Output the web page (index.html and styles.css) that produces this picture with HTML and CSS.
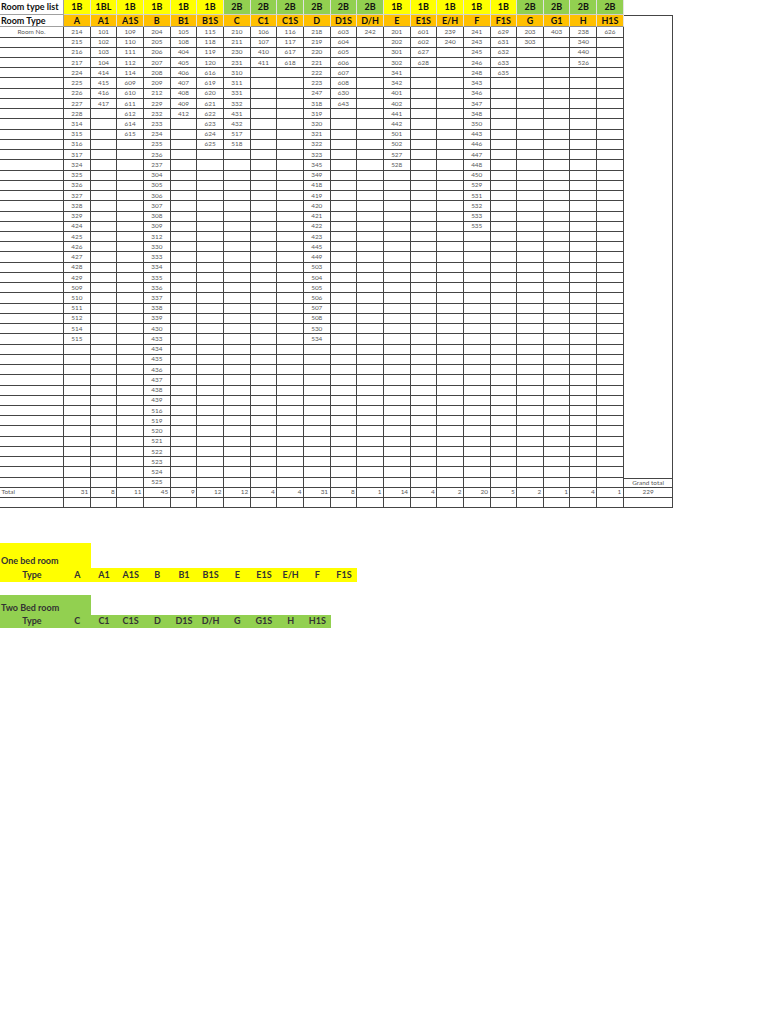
FILE: index.html
```html
<!DOCTYPE html>
<html lang="en">
<head>
<meta charset="utf-8">
<title>Room type list</title>
<link rel="stylesheet" href="styles.css">
</head>
<body>
<table class="sheet">
<colgroup><col class="lab"><col span="21" class="c"><col class="gtc"></colgroup>
<tr class="hd h1">
<td class="lab">Room type list</td>
<td class="y">1B</td><td class="y">1BL</td><td class="y">1B</td><td class="y">1B</td><td class="y">1B</td><td class="y">1B</td>
<td class="g">2B</td><td class="g">2B</td><td class="g">2B</td><td class="g">2B</td><td class="g">2B</td><td class="g">2B</td>
<td class="y">1B</td><td class="y">1B</td><td class="y">1B</td><td class="y">1B</td><td class="y">1B</td>
<td class="g">2B</td><td class="g">2B</td><td class="g">2B</td><td class="g">2B</td>
<td class="gt-none"></td>
</tr>
<tr class="hd h2">
<td class="lab">Room Type</td>
<td class="o">A</td><td class="o">A1</td><td class="o">A1S</td><td class="o">B</td><td class="o">B1</td><td class="o">B1S</td><td class="o">C</td><td class="o">C1</td><td class="o">C1S</td><td class="o">D</td><td class="o">D1S</td><td class="o">D/H</td><td class="o">E</td><td class="o">E1S</td><td class="o">E/H</td><td class="o">F</td><td class="o">F1S</td><td class="o">G</td><td class="o">G1</td><td class="o">H</td><td class="o">H1S</td>
<td class="gt-blank" rowspan="45"></td>
</tr>
<tr class="r"><td>Room No.</td><td>214</td><td>101</td><td>109</td><td>204</td><td>105</td><td>115</td><td>210</td><td>106</td><td>116</td><td>218</td><td>603</td><td>242</td><td>201</td><td>601</td><td>239</td><td>241</td><td>629</td><td>203</td><td>403</td><td>238</td><td>626</td></tr>
<tr class="r"><td></td><td>215</td><td>102</td><td>110</td><td>205</td><td>108</td><td>118</td><td>211</td><td>107</td><td>117</td><td>219</td><td>604</td><td></td><td>202</td><td>602</td><td>240</td><td>243</td><td>631</td><td>303</td><td></td><td>340</td><td></td></tr>
<tr class="r"><td></td><td>216</td><td>103</td><td>111</td><td>206</td><td>404</td><td>119</td><td>230</td><td>410</td><td>617</td><td>220</td><td>605</td><td></td><td>301</td><td>627</td><td></td><td>245</td><td>632</td><td></td><td></td><td>440</td><td></td></tr>
<tr class="r"><td></td><td>217</td><td>104</td><td>112</td><td>207</td><td>405</td><td>120</td><td>231</td><td>411</td><td>618</td><td>221</td><td>606</td><td></td><td>302</td><td>628</td><td></td><td>246</td><td>633</td><td></td><td></td><td>526</td><td></td></tr>
<tr class="r"><td></td><td>224</td><td>414</td><td>114</td><td>208</td><td>406</td><td>616</td><td>310</td><td></td><td></td><td>222</td><td>607</td><td></td><td>341</td><td></td><td></td><td>248</td><td>635</td><td></td><td></td><td></td><td></td></tr>
<tr class="r"><td></td><td>225</td><td>415</td><td>609</td><td>209</td><td>407</td><td>619</td><td>311</td><td></td><td></td><td>223</td><td>608</td><td></td><td>342</td><td></td><td></td><td>343</td><td></td><td></td><td></td><td></td><td></td></tr>
<tr class="r"><td></td><td>226</td><td>416</td><td>610</td><td>212</td><td>408</td><td>620</td><td>331</td><td></td><td></td><td>247</td><td>630</td><td></td><td>401</td><td></td><td></td><td>346</td><td></td><td></td><td></td><td></td><td></td></tr>
<tr class="r"><td></td><td>227</td><td>417</td><td>611</td><td>229</td><td>409</td><td>621</td><td>332</td><td></td><td></td><td>318</td><td>643</td><td></td><td>402</td><td></td><td></td><td>347</td><td></td><td></td><td></td><td></td><td></td></tr>
<tr class="r"><td></td><td>228</td><td></td><td>612</td><td>232</td><td>412</td><td>622</td><td>431</td><td></td><td></td><td>319</td><td></td><td></td><td>441</td><td></td><td></td><td>348</td><td></td><td></td><td></td><td></td><td></td></tr>
<tr class="r"><td></td><td>314</td><td></td><td>614</td><td>233</td><td></td><td>623</td><td>432</td><td></td><td></td><td>320</td><td></td><td></td><td>442</td><td></td><td></td><td>350</td><td></td><td></td><td></td><td></td><td></td></tr>
<tr class="r"><td></td><td>315</td><td></td><td>615</td><td>234</td><td></td><td>624</td><td>517</td><td></td><td></td><td>321</td><td></td><td></td><td>501</td><td></td><td></td><td>443</td><td></td><td></td><td></td><td></td><td></td></tr>
<tr class="r"><td></td><td>316</td><td></td><td></td><td>235</td><td></td><td>625</td><td>518</td><td></td><td></td><td>322</td><td></td><td></td><td>502</td><td></td><td></td><td>446</td><td></td><td></td><td></td><td></td><td></td></tr>
<tr class="r"><td></td><td>317</td><td></td><td></td><td>236</td><td></td><td></td><td></td><td></td><td></td><td>323</td><td></td><td></td><td>527</td><td></td><td></td><td>447</td><td></td><td></td><td></td><td></td><td></td></tr>
<tr class="r"><td></td><td>324</td><td></td><td></td><td>237</td><td></td><td></td><td></td><td></td><td></td><td>345</td><td></td><td></td><td>528</td><td></td><td></td><td>448</td><td></td><td></td><td></td><td></td><td></td></tr>
<tr class="r"><td></td><td>325</td><td></td><td></td><td>304</td><td></td><td></td><td></td><td></td><td></td><td>349</td><td></td><td></td><td></td><td></td><td></td><td>450</td><td></td><td></td><td></td><td></td><td></td></tr>
<tr class="r"><td></td><td>326</td><td></td><td></td><td>305</td><td></td><td></td><td></td><td></td><td></td><td>418</td><td></td><td></td><td></td><td></td><td></td><td>529</td><td></td><td></td><td></td><td></td><td></td></tr>
<tr class="r"><td></td><td>327</td><td></td><td></td><td>306</td><td></td><td></td><td></td><td></td><td></td><td>419</td><td></td><td></td><td></td><td></td><td></td><td>531</td><td></td><td></td><td></td><td></td><td></td></tr>
<tr class="r"><td></td><td>328</td><td></td><td></td><td>307</td><td></td><td></td><td></td><td></td><td></td><td>420</td><td></td><td></td><td></td><td></td><td></td><td>532</td><td></td><td></td><td></td><td></td><td></td></tr>
<tr class="r"><td></td><td>329</td><td></td><td></td><td>308</td><td></td><td></td><td></td><td></td><td></td><td>421</td><td></td><td></td><td></td><td></td><td></td><td>533</td><td></td><td></td><td></td><td></td><td></td></tr>
<tr class="r"><td></td><td>424</td><td></td><td></td><td>309</td><td></td><td></td><td></td><td></td><td></td><td>422</td><td></td><td></td><td></td><td></td><td></td><td>535</td><td></td><td></td><td></td><td></td><td></td></tr>
<tr class="r"><td></td><td>425</td><td></td><td></td><td>312</td><td></td><td></td><td></td><td></td><td></td><td>423</td><td></td><td></td><td></td><td></td><td></td><td></td><td></td><td></td><td></td><td></td><td></td></tr>
<tr class="r"><td></td><td>426</td><td></td><td></td><td>330</td><td></td><td></td><td></td><td></td><td></td><td>445</td><td></td><td></td><td></td><td></td><td></td><td></td><td></td><td></td><td></td><td></td><td></td></tr>
<tr class="r"><td></td><td>427</td><td></td><td></td><td>333</td><td></td><td></td><td></td><td></td><td></td><td>449</td><td></td><td></td><td></td><td></td><td></td><td></td><td></td><td></td><td></td><td></td><td></td></tr>
<tr class="r"><td></td><td>428</td><td></td><td></td><td>334</td><td></td><td></td><td></td><td></td><td></td><td>503</td><td></td><td></td><td></td><td></td><td></td><td></td><td></td><td></td><td></td><td></td><td></td></tr>
<tr class="r"><td></td><td>429</td><td></td><td></td><td>335</td><td></td><td></td><td></td><td></td><td></td><td>504</td><td></td><td></td><td></td><td></td><td></td><td></td><td></td><td></td><td></td><td></td><td></td></tr>
<tr class="r"><td></td><td>509</td><td></td><td></td><td>336</td><td></td><td></td><td></td><td></td><td></td><td>505</td><td></td><td></td><td></td><td></td><td></td><td></td><td></td><td></td><td></td><td></td><td></td></tr>
<tr class="r"><td></td><td>510</td><td></td><td></td><td>337</td><td></td><td></td><td></td><td></td><td></td><td>506</td><td></td><td></td><td></td><td></td><td></td><td></td><td></td><td></td><td></td><td></td><td></td></tr>
<tr class="r"><td></td><td>511</td><td></td><td></td><td>338</td><td></td><td></td><td></td><td></td><td></td><td>507</td><td></td><td></td><td></td><td></td><td></td><td></td><td></td><td></td><td></td><td></td><td></td></tr>
<tr class="r"><td></td><td>512</td><td></td><td></td><td>339</td><td></td><td></td><td></td><td></td><td></td><td>508</td><td></td><td></td><td></td><td></td><td></td><td></td><td></td><td></td><td></td><td></td><td></td></tr>
<tr class="r"><td></td><td>514</td><td></td><td></td><td>430</td><td></td><td></td><td></td><td></td><td></td><td>530</td><td></td><td></td><td></td><td></td><td></td><td></td><td></td><td></td><td></td><td></td><td></td></tr>
<tr class="r"><td></td><td>515</td><td></td><td></td><td>433</td><td></td><td></td><td></td><td></td><td></td><td>534</td><td></td><td></td><td></td><td></td><td></td><td></td><td></td><td></td><td></td><td></td><td></td></tr>
<tr class="r"><td></td><td></td><td></td><td></td><td>434</td><td></td><td></td><td></td><td></td><td></td><td></td><td></td><td></td><td></td><td></td><td></td><td></td><td></td><td></td><td></td><td></td><td></td></tr>
<tr class="r"><td></td><td></td><td></td><td></td><td>435</td><td></td><td></td><td></td><td></td><td></td><td></td><td></td><td></td><td></td><td></td><td></td><td></td><td></td><td></td><td></td><td></td><td></td></tr>
<tr class="r"><td></td><td></td><td></td><td></td><td>436</td><td></td><td></td><td></td><td></td><td></td><td></td><td></td><td></td><td></td><td></td><td></td><td></td><td></td><td></td><td></td><td></td><td></td></tr>
<tr class="r"><td></td><td></td><td></td><td></td><td>437</td><td></td><td></td><td></td><td></td><td></td><td></td><td></td><td></td><td></td><td></td><td></td><td></td><td></td><td></td><td></td><td></td><td></td></tr>
<tr class="r"><td></td><td></td><td></td><td></td><td>438</td><td></td><td></td><td></td><td></td><td></td><td></td><td></td><td></td><td></td><td></td><td></td><td></td><td></td><td></td><td></td><td></td><td></td></tr>
<tr class="r"><td></td><td></td><td></td><td></td><td>439</td><td></td><td></td><td></td><td></td><td></td><td></td><td></td><td></td><td></td><td></td><td></td><td></td><td></td><td></td><td></td><td></td><td></td></tr>
<tr class="r"><td></td><td></td><td></td><td></td><td>516</td><td></td><td></td><td></td><td></td><td></td><td></td><td></td><td></td><td></td><td></td><td></td><td></td><td></td><td></td><td></td><td></td><td></td></tr>
<tr class="r"><td></td><td></td><td></td><td></td><td>519</td><td></td><td></td><td></td><td></td><td></td><td></td><td></td><td></td><td></td><td></td><td></td><td></td><td></td><td></td><td></td><td></td><td></td></tr>
<tr class="r"><td></td><td></td><td></td><td></td><td>520</td><td></td><td></td><td></td><td></td><td></td><td></td><td></td><td></td><td></td><td></td><td></td><td></td><td></td><td></td><td></td><td></td><td></td></tr>
<tr class="r"><td></td><td></td><td></td><td></td><td>521</td><td></td><td></td><td></td><td></td><td></td><td></td><td></td><td></td><td></td><td></td><td></td><td></td><td></td><td></td><td></td><td></td><td></td></tr>
<tr class="r"><td></td><td></td><td></td><td></td><td>522</td><td></td><td></td><td></td><td></td><td></td><td></td><td></td><td></td><td></td><td></td><td></td><td></td><td></td><td></td><td></td><td></td><td></td></tr>
<tr class="r"><td></td><td></td><td></td><td></td><td>523</td><td></td><td></td><td></td><td></td><td></td><td></td><td></td><td></td><td></td><td></td><td></td><td></td><td></td><td></td><td></td><td></td><td></td></tr>
<tr class="r"><td></td><td></td><td></td><td></td><td>524</td><td></td><td></td><td></td><td></td><td></td><td></td><td></td><td></td><td></td><td></td><td></td><td></td><td></td><td></td><td></td><td></td><td></td></tr>
<tr class="r"><td></td><td></td><td></td><td></td><td>525</td><td></td><td></td><td></td><td></td><td></td><td></td><td></td><td></td><td></td><td></td><td></td><td></td><td></td><td></td><td></td><td></td><td></td><td class="gt-label">Grand total</td></tr>
<tr class="r tot"><td class="lab">Total</td><td>31</td><td>8</td><td>11</td><td>45</td><td>9</td><td>12</td><td>12</td><td>4</td><td>4</td><td>31</td><td>8</td><td>1</td><td>14</td><td>4</td><td>2</td><td>20</td><td>5</td><td>2</td><td>1</td><td>4</td><td>1</td><td class="gt">229</td></tr>
<tr class="r"><td></td><td></td><td></td><td></td><td></td><td></td><td></td><td></td><td></td><td></td><td></td><td></td><td></td><td></td><td></td><td></td><td></td><td></td><td></td><td></td><td></td><td></td><td></td></tr>
</table>

<table class="legend legend-one">
<colgroup><col class="lab"><col span="11" class="c"></colgroup>
<tr class="lg-head"><td colspan="2" class="y lg-title">One bed room</td><td colspan="10"></td></tr>
<tr class="lg-types y"><td>Type</td><td>A</td><td>A1</td><td>A1S</td><td>B</td><td>B1</td><td>B1S</td><td>E</td><td>E1S</td><td>E/H</td><td>F</td><td>F1S</td></tr>
</table>

<table class="legend legend-two">
<colgroup><col class="lab"><col span="10" class="c"></colgroup>
<tr class="lg-head"><td colspan="2" class="g lg-title">Two Bed room</td><td colspan="9"></td></tr>
<tr class="lg-types g"><td>Type</td><td>C</td><td>C1</td><td>C1S</td><td>D</td><td>D1S</td><td>D/H</td><td>G</td><td>G1S</td><td>H</td><td>H1S</td></tr>
</table>
</body>
</html>
```

FILE: styles.css
```css
* {
  box-sizing: border-box;
}

body {
  margin: 0;
  background: #ffffff;
  font-family: Lato, "Open Sans", sans-serif;
  color: #222222;
}

/* ---------- main sheet ---------- */
.sheet {
  border-collapse: separate;
  border-spacing: 0;
  table-layout: fixed;
  width: 673.33px;
}

.sheet col.lab { width: 64px; }
.sheet col.c { width: 26.667px; }
.sheet col.gtc { width: 49.33px; }

.sheet td {
  padding: 0;
  border-right: 1px solid #454545;
  border-bottom: 1px solid #454545;
  font-size: 6.4px;
  line-height: 8px;
  color: #5a5a5a;
  text-align: center;
  vertical-align: middle;
  white-space: nowrap;
  overflow: hidden;
}

.sheet .r { height: 10.235px; }

/* header rows */
.sheet .h1 { height: 14.8px; }
.sheet .h2 { height: 12.5px; }

.sheet .hd td {
  font-size: 9px;
  font-weight: 700;
  line-height: 10px;
  color: #111111;
  border-right: 1px solid #e2e2e2;
  border-bottom: 1px solid #cfcfcf;
}

.sheet .h2 td {
  border-bottom: 1px solid #8c8c8c;
}

.sheet .hd .lab {
  text-align: left;
  padding-left: 1px;
  border-right: 1px solid #a0a0a0;
  border-bottom: 1px solid #a0a0a0;
}

.y { background: #ffff00; }
.g { background: #92d050; }
.o { background: #ffc000; }

/* grand total column */
.sheet .hd .gt-none {
  border: 0;
  background: transparent;
}

.sheet .gt-blank {
  border-top: 1px solid #454545;
  border-right: 1px solid #454545;
  border-bottom: 0;
}

.sheet .h2 .gt-blank {
  border-bottom: 0;
  border-right: 1px solid #454545;
}

.sheet .gt-label {
  border-top: 1px solid #454545;
}

/* total row */
.sheet .tot td {
  text-align: right;
  padding-right: 1.5px;
}

.sheet .tot .lab {
  text-align: left;
  padding-left: 1.5px;
}

.sheet .tot .gt {
  text-align: center;
  padding-right: 0;
}

/* ---------- legends ---------- */
.legend {
  border-collapse: separate;
  border-spacing: 0;
  table-layout: fixed;
}

.legend col.lab { width: 64px; }
.legend col.c { width: 26.667px; }

.legend-one {
  width: 357.33px;
  margin-top: 35px;
}

.legend-two {
  width: 330.67px;
  margin-top: 13.3px;
}

.legend td {
  padding: 0;
  font-size: 9px;
  font-weight: 700;
  line-height: 10px;
  color: #333333;
  text-align: center;
  white-space: nowrap;
}

.legend-one .lg-head { height: 25px; }
.legend-two .lg-head { height: 19.3px; }

.legend .lg-title {
  text-align: left;
  vertical-align: bottom;
  padding-left: 1px;
  padding-bottom: 2px;
}

.legend .lg-types { height: 13.6px; }
```
